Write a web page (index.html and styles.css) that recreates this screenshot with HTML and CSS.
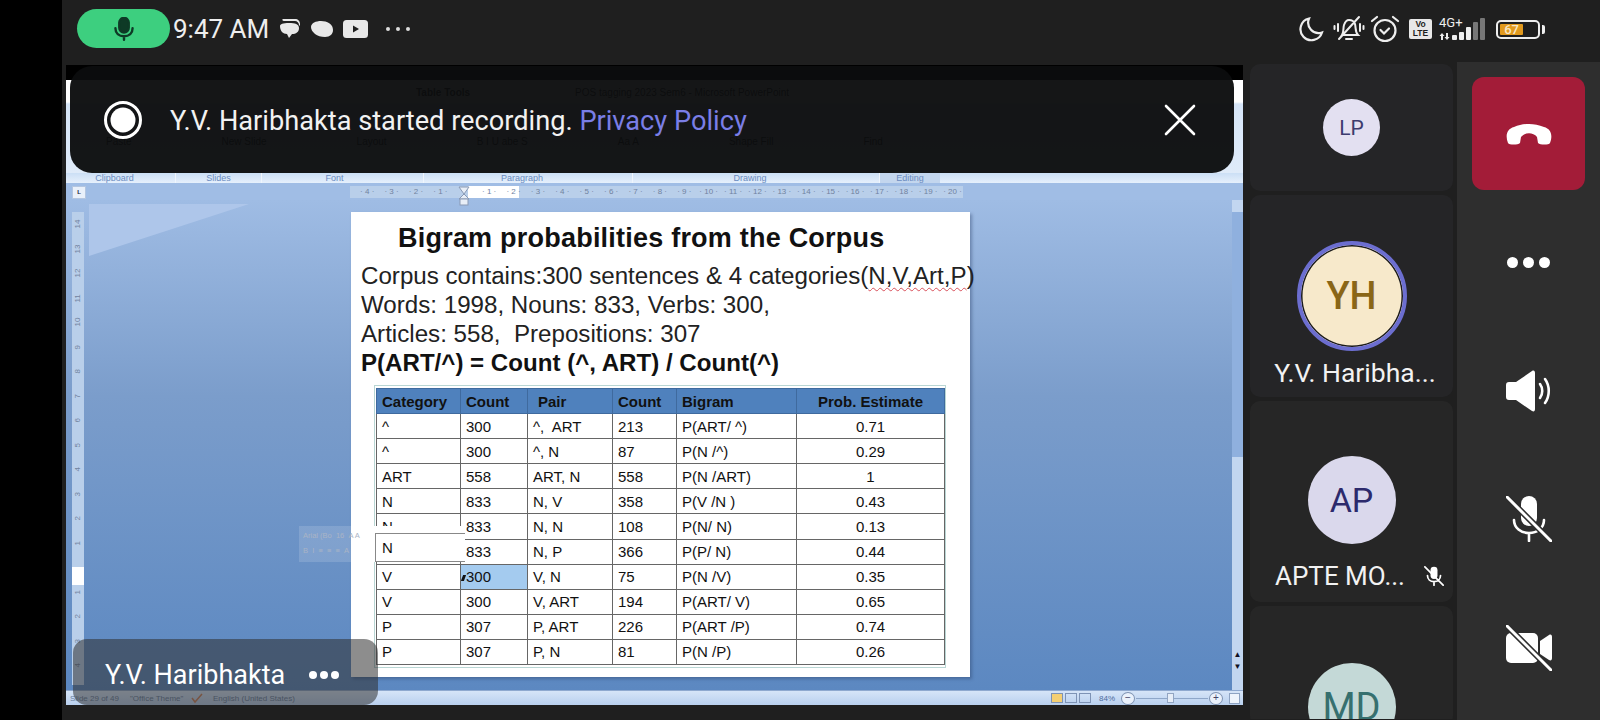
FILE: index.html
```html
<!DOCTYPE html>
<html lang="en">
<head>
  <meta charset="UTF-8">
  <meta name="viewport" content="width=device-width, initial-scale=1.0">
  <title>Meeting</title>
  <link rel="stylesheet" href="styles.css">
</head>
<body>
  <div class="edge"></div>
  <div class="app">

    <header class="status">
      <div class="rec-pill">
        <svg width="22" height="24" viewBox="0 0 24 28" fill="none" stroke="#0e3a26" stroke-width="2.800" stroke-linecap="round">
          <rect x="6.500" y="1" width="11" height="17" rx="5.500" fill="#0e3a26"/>
          <path d="M2 13c0 6 4 9.500 10 9.500s10-3.500 10-9.500M12 22.500v4"/>
        </svg>
      </div>
      <span class="clock">9:47 AM</span>
      <svg class="note-icon" width="24" height="22" viewBox="0 0 24 22" fill="#e8e8e8">
        <path d="M6 1h12c3 0 5 2 5 5v1c0 1-1 1-1 0 0-2-2-4-4-4H7C5 3 5 1 6 1z"/>
        <path d="M3 8c0-2 3-3 9-3s10 1 10 5-3 6-7 6l-3 4-2-4c-4 0-7-3-7-8z"/>
      </svg>
      <svg class="note-icon" width="24" height="18" viewBox="0 0 24 18" fill="#e8e8e8">
        <path d="M1 7c0-4 5-6 10-6 6 0 12 3 12 9 0 4-3 7-8 7-8 0-14-5-14-10z"/>
      </svg>
      <svg class="note-icon" width="25" height="18" viewBox="0 0 25 18">
        <rect width="25" height="18" rx="3.500" fill="#e8e8e8"/>
        <path d="M10 5.500l6 3.500-6 3.500z" fill="#1f1f1f"/>
      </svg>
      <div class="more-dots small"><i></i><i></i><i></i></div>

      <div class="sys-icons">
        <svg width="26" height="26" viewBox="0 0 26 26" fill="none" stroke="#eee" stroke-width="2.200">
          <path d="M11 2.500a11 11 0 1 0 13 14 10.500 10.500 0 0 1-13-14z"/>
        </svg>
        <svg class="bell" width="32" height="28" viewBox="0 0 32 28" fill="none" stroke="#eee" stroke-width="2" stroke-linecap="round">
          <path d="M9 20c2-3 1-7 2-10 1-3 3-5 5-5s5 1 6 4c1 4 0 8 3 11zM13 24h6M6 24L26 2"/>
          <path d="M5 9v7M1.500 11v3M27 9v7M30.500 11v3"/>
        </svg>
        <svg width="30" height="28" viewBox="0 0 30 28" fill="none" stroke="#eee" stroke-width="2.200" stroke-linecap="round">
          <circle cx="15" cy="15.500" r="10.500"/>
          <path d="M10.500 15l3.500 3.500 5-5M2 6l5-4M28 6l-5-4"/>
        </svg>
        <div class="volte"><span>Vo</span><span>LTE</span></div>
        <div class="signal">
          <span class="net">4G+</span>
          <svg width="47" height="22" viewBox="0 0 47 22" fill="#eee">
            <path d="M3 15l2.500 3H4v4H2v-4H.5zM8 22l-2.500-3H7v-4h2v4h1.500z"/>
            <rect x="13" y="17" width="5" height="5" rx="1"/>
            <rect x="20" y="14" width="5" height="8" rx="1"/>
            <rect x="27" y="9" width="5" height="13" rx="1"/>
            <rect x="34" y="4" width="5" height="18" rx="1" fill="#777"/>
            <rect x="41" y="0" width="5" height="22" rx="1" fill="#777"/>
          </svg>
        </div>
        <div class="battery"><div class="battery-fill">67</div></div>
        <div class="battery-nub"></div>
      </div>
    </header>

    <main class="main">
      <section class="stage">
        <div class="ppt">

          <div class="ribbon">
            <div class="ribbon-title">
              <span class="tools-name">Table Tools</span>
              <span class="doc-name">POS tagging 2023 Sem6 - Microsoft PowerPoint</span>
            </div>
            <div class="ribbon-body">
              <span>Paste</span><span>New Slide</span><span>Layout</span><span>B I U abe S</span><span>Aa A</span><span>Shape Fill</span><span>Find</span>
            </div>
          </div>

          <div class="ribbon-labels">
            <span class="grp g-clip">Clipboard</span>
            <span class="grp g-slides">Slides</span>
            <span class="grp g-font">Font</span>
            <span class="grp g-para">Paragraph</span>
            <span class="grp g-draw">Drawing</span>
            <span class="grp g-edit">Editing</span>
          </div>

          <div class="ruler-row">
            <div class="corner-tab">L</div>
            <div class="hruler">
              <span>4</span><span>3</span><span>2</span><span>1</span><span class="blank"></span><span>1</span><span>2</span><span>3</span><span>4</span><span>5</span><span>6</span><span>7</span><span>8</span><span>9</span><span>10</span><span>11</span><span>12</span><span>13</span><span>14</span><span>15</span><span>16</span><span>17</span><span>18</span><span>19</span><span>20</span>
              <svg class="indent-marker" width="12" height="20" viewBox="0 0 12 20">
                <path d="M1 1h10L6 8l5 5H1l5-5z" fill="#e8eef7" stroke="#8a9ab5"/>
                <rect x="2" y="13" width="8" height="6" fill="#e8eef7" stroke="#8a9ab5"/>
              </svg>
            </div>
          </div>

          <div class="workspace">
            <div class="vruler">
              <span>14</span><span>13</span><span>12</span><span>11</span><span>10</span><span>9</span><span>8</span><span>7</span><span>6</span><span>5</span><span>4</span><span>3</span><span>2</span><span>1</span><span class="blank"></span><span>1</span><span>2</span><span>3</span><span>4</span>
            </div>

            <div class="canvas">
              <div class="slide">
                <h1 class="slide-title">Bigram probabilities from the Corpus</h1>
                <p class="slide-line">Corpus contains:300 sentences &amp; 4 categories(<span class="spell">N,V,Art,P</span>)</p>
                <p class="slide-line">Words: 1998, Nouns: 833, Verbs: 300,</p>
                <p class="slide-line">Articles: 558,&nbsp; Prepositions: 307</p>
                <p class="slide-line formula">P(ART/^) = Count (^, ART) / Count(^)</p>

                <div class="table-frame">
                  <table class="bigram">
                    <colgroup>
                      <col class="c1"><col class="c2"><col class="c3"><col class="c4"><col class="c5"><col class="c6">
                    </colgroup>
                    <tr><th>Category</th><th>Count</th><th class="ind">Pair</th><th>Count</th><th>Bigram</th><th class="mid">Prob. Estimate</th></tr>
                    <tr><td>^</td><td>300</td><td>^,&nbsp; ART</td><td>213</td><td>P(ART/ ^)</td><td class="mid">0.71</td></tr>
                    <tr><td>^</td><td>300</td><td>^, N</td><td>87</td><td>P(N /^)</td><td class="mid">0.29</td></tr>
                    <tr><td>ART</td><td>558</td><td>ART, N</td><td>558</td><td>P(N /ART)</td><td class="mid">1</td></tr>
                    <tr><td>N</td><td>833</td><td>N, V</td><td>358</td><td>P(V /N )</td><td class="mid">0.43</td></tr>
                    <tr><td>N</td><td>833</td><td>N, N</td><td>108</td><td>P(N/ N)</td><td class="mid">0.13</td></tr>
                    <tr><td></td><td>833</td><td>N, P</td><td>366</td><td>P(P/ N)</td><td class="mid">0.44</td></tr>
                    <tr><td>V</td><td class="picked">300</td><td>V, N</td><td>75</td><td>P(N /V)</td><td class="mid">0.35</td></tr>
                    <tr><td>V</td><td>300</td><td>V, ART</td><td>194</td><td>P(ART/ V)</td><td class="mid">0.65</td></tr>
                    <tr><td>P</td><td>307</td><td>P, ART</td><td>226</td><td>P(ART /P)</td><td class="mid">0.74</td></tr>
                    <tr><td>P</td><td>307</td><td>P, N</td><td>81</td><td>P(N /P)</td><td class="mid">0.26</td></tr>
                  </table>
                </div>

                <div class="mini-toolbar">
                  <div class="mini-row">Arial (Bo &nbsp;16 &nbsp;A A</div>
                  <div class="mini-row">B &nbsp;I &nbsp;≡ &nbsp;≡ &nbsp;≡ &nbsp;A</div>
                  <div class="mini-cell">N</div>
                </div>
              </div>
            </div>

            <div class="vscroll">
              <div class="thumb"></div>
              <div class="scroll-btns"><span>▲</span><span>▼</span></div>
            </div>
          </div>

          <footer class="ppt-status">
            <span class="ps-text s1">Slide 29 of 49</span>
            <span class="ps-text s2">"Office Theme"</span>
            <svg class="spell-check" width="14" height="12" viewBox="0 0 14 12" fill="none" stroke-width="1.500">
              <path d="M2 6l3 4 7-8" stroke="#d0805a"/>
            </svg>
            <span class="ps-text s3">English (United States)</span>
            <div class="view-btns"><i class="on"></i><i></i><i></i></div>
            <span class="ps-text pct">84%</span>
            <span class="zoom-btn">−</span>
            <div class="zoom-track"><i></i></div>
            <span class="zoom-btn">+</span>
            <span class="fit-btn"></span>
          </footer>
        </div>

        <div class="banner">
          <svg class="rec-mark" width="40" height="40" viewBox="0 0 40 40">
            <circle cx="20" cy="20" r="17.500" fill="none" stroke="#fff" stroke-width="3"/>
            <circle cx="20" cy="20" r="12.500" fill="#fff"/>
          </svg>
          <span class="banner-text">Y.V. Haribhakta started recording. <a class="banner-link">Privacy Policy</a></span>
          <svg class="banner-close" width="32" height="32" viewBox="0 0 32 32" stroke="#fff" stroke-width="2.600" stroke-linecap="round">
            <path d="M2 2l28 28M30 2L2 30"/>
          </svg>
        </div>

        <div class="name-tag">
          <span>Y.V. Haribhakta</span>
          <div class="more-dots"><i></i><i></i><i></i></div>
        </div>
      </section>

      <aside class="people">
        <div class="tile t-lp"><div class="avatar av-lp">LP</div></div>
        <div class="tile t-yh">
          <div class="avatar av-yh">YH</div>
          <div class="tile-name">Y.V. Haribha...</div>
        </div>
        <div class="tile t-ap">
          <div class="avatar av-ap">AP</div>
          <div class="tile-name">APTE MO...
            <svg class="name-mute" width="20" height="20" viewBox="0 0 46 46" fill="none" stroke="#fff" stroke-width="4" stroke-linecap="round">
              <rect x="15" y="2" width="16" height="28" rx="8" fill="#fff" stroke="none"/>
              <path d="M8 22c0 9 7 14 15 14s15-5 15-14M23 36v8M2 2l42 42"/>
            </svg>
          </div>
        </div>
        <div class="tile t-md"><div class="avatar av-md">MD</div></div>
      </aside>

      <aside class="controls">
        <div class="hangup">
          <svg width="46" height="22" viewBox="0 0 46 22" fill="#fff">
            <path d="M2 20C-1 12 1 6 8 4c10-4 20-4 30 0 7 2 9 8 6 16-1 2-10 2-12 0l-1-6c-4-5-12-5-16 0l-1 6c-2 2-11 2-12 0z"/>
          </svg>
        </div>
        <div class="ctrl"><div class="more-dots big"><i></i><i></i><i></i></div></div>
        <div class="ctrl">
          <svg width="46" height="42" viewBox="0 0 46 42" fill="#fff">
            <path d="M3 12h7L26 1c2-1 3 0 3 2v36c0 2-1 3-3 2L10 30H3c-2 0-3-1-3-3V15c0-2 1-3 3-3z"/>
            <path d="M34 14c3 4 3 10 0 14M39 9c5 7 5 17 0 24" fill="none" stroke="#fff" stroke-width="2.600" stroke-linecap="round"/>
          </svg>
        </div>
        <div class="ctrl">
          <svg width="46" height="46" viewBox="0 0 46 46" fill="none" stroke="#fff" stroke-width="2.600" stroke-linecap="round">
            <rect x="15" y="0" width="16" height="30" rx="8" fill="#fff" stroke="none"/>
            <path d="M8 24c0 8 7 13 15 13s15-5 15-13M23 37v8"/>
            <path d="M1 1l44 44" stroke="#2e2e2e" stroke-width="6"/>
            <path d="M1 1l44 44" stroke-width="3"/>
          </svg>
        </div>
        <div class="ctrl">
          <svg width="46" height="46" viewBox="0 0 46 46" fill="none">
            <rect x="0" y="8" width="32" height="30" rx="5" fill="#fff"/>
            <path d="M34 16l9-6c2-1 3 0 3 2v21c0 2-1 3-3 2l-9-6z" fill="#fff"/>
            <path d="M1 1l44 44" stroke="#2e2e2e" stroke-width="6"/>
            <path d="M1 1l44 44" stroke="#fff" stroke-width="3" stroke-linecap="round"/>
          </svg>
        </div>
      </aside>
    </main>
  </div>
</body>
</html>
```

FILE: styles.css
```css
html, body { margin: 0; height: 720px; overflow: hidden; }
body { display: flex; background: #1f1f1f; font-family: Roboto, "Liberation Sans", sans-serif; color: #fff; }
.edge { width: 62px; background: #000; }
.app { flex: 1; display: flex; flex-direction: column; min-width: 0; }

/* phone status bar */
.status { height: 62px; display: flex; align-items: center; padding-left: 15px; }
.rec-pill { width: 93px; height: 39px; border-radius: 20px; background: #3dcf7f; display: flex; align-items: center; justify-content: center; margin-top: -5px; }
.clock { font-size: 26px; margin: -5px 8px 0 3px; color: #eee; }
.note-icon { margin: -4px 9px 0 0; }
.more-dots { display: flex; gap: 3px; }
.more-dots i { width: 8px; height: 8px; border-radius: 50%; background: #fff; }
.more-dots.small { margin: -5px 0 0 9px; gap: 6px; }
.more-dots.small i { width: 4px; height: 4px; background: #ddd; }
.more-dots.big { gap: 5px; }
.more-dots.big i { width: 11px; height: 11px; }

.sys-icons { margin-left: auto; margin-right: 55px; display: flex; align-items: center; margin-top: -4px; }
.sys-icons svg { margin-right: 9px; }
.sys-icons .bell { margin-right: 5px; }
.sys-icons .signal svg { margin: 0; display: block; }
.volte { width: 23px; height: 20px; background: #e8e8e8; border-radius: 2px; color: #1f1f1f; font: bold 8.500px/9px "Liberation Sans", sans-serif; display: flex; flex-direction: column; align-items: center; justify-content: center; margin-right: 7px; }
.signal { position: relative; width: 47px; margin-right: 10px; }
.net { position: absolute; left: 0; top: -1px; font-size: 13px; line-height: 12px; color: #eee; }
.battery { width: 44px; height: 19px; box-sizing: border-box; border: 2px solid #eee; border-radius: 5px; padding: 2px; }
.battery-fill { width: 64%; height: 100%; background: #e29a1e; font-size: 13px; line-height: 11px; font-weight: 500; color: #f8e8c8; text-align: center; border-radius: 1px; }
.battery-nub { width: 3px; height: 9px; background: #eee; border-radius: 0 2px 2px 0; margin-left: 2px; }

/* main row */
.main { display: flex; height: 658px; }
.stage { position: relative; width: 1177px; height: 640px; margin: 3px 0 0 4px; border-top: 15px solid #000; box-sizing: border-box; flex: none; }
.ppt { height: 625px; display: flex; flex-direction: column; background: #a3bfe6; overflow: hidden; }

/* ribbon, mostly behind the banner */
.ribbon { height: 93px; background: linear-gradient(#fff 0, #fff 22px, #d6e5f7 24px, #dfebf9 100%); color: #222; font: 10px "Liberation Sans", sans-serif; }
.ribbon-title { height: 24px; display: flex; align-items: center; }
.tools-name { margin-left: 350px; font-weight: bold; }
.doc-name { margin-left: 105px; }
.ribbon-body { display: flex; gap: 90px; padding: 32px 0 0 40px; }
.ribbon-labels { height: 10px; display: flex; background: linear-gradient(#cbdff5, #e6f0fc); font: 9px/10px "Liberation Sans", sans-serif; color: #6b8cc0; }
.grp { text-align: center; box-sizing: border-box; border-right: 1px solid #f0f6fd; }
.g-clip { width: 110px; padding-right: 12px; }
.g-slides { width: 86px; }
.g-font { width: 162px; padding-right: 16px; }
.g-para { width: 209px; padding-right: 12px; }
.g-draw { width: 247px; padding-right: 12px; }
.g-edit { width: 60px; background: #c3d6ee; border: 0; }

.ruler-row { height: 17px; box-sizing: border-box; padding-top: 1px; display: flex; align-items: center; background: #a0bde5; }
.corner-tab { width: 12px; height: 11px; margin-left: 6px; background: #e9f0fa; border: 1px solid #b4c6e0; color: #223; font: bold 6px/11px "Liberation Sans", sans-serif; text-align: center; }
.hruler { position: relative; margin-left: 264px; width: 613px; height: 12px; padding-left: 5px; box-sizing: border-box; display: flex; font: 8px/12px "Liberation Sans", sans-serif; color: #71839f; background: linear-gradient(90deg, #b9cfea 118px, #fff 118px, #fff 169px, #b9cfea 169px); }
.hruler span { width: 24.400px; flex: none; text-align: center; }
.hruler span::before { content: "· "; }
.hruler span::after { content: " ·"; }
.hruler span.blank::before, .hruler span.blank::after { content: ""; }
.indent-marker { position: absolute; left: 108px; top: 0; }

.workspace { height: 490px; display: flex; background: linear-gradient(#9fbce4, #7b9dcb 40%, #5c88c1); }
.vruler { width: 12px; margin: 12px 5px 0 6px; height: 473px; display: flex; flex-direction: column; background: linear-gradient(#b9cfea 355px, #fff 355px, #fff 373px, #b9cfea 373px); font: 8px "Liberation Sans", sans-serif; color: #71839f; }
.vruler span { height: 24.500px; flex: none; writing-mode: vertical-rl; transform: rotate(180deg); text-align: center; line-height: 12px; }

.canvas { position: relative; flex: 1; padding: 12px 0 0 262px; min-width: 0; }
.canvas::before { content: ""; position: absolute; left: 0; top: 4px; width: 160px; height: 52px; background: #aec6ea; clip-path: polygon(0 0, 100% 0, 0 100%); }

/* slide */
.slide { position: relative; width: 619px; height: 465px; box-sizing: border-box; padding: 10px 0 0 10px; background: #fff; color: #111; font-family: "Liberation Sans", Arial, sans-serif; box-shadow: 2px 2px 3px rgba(40, 60, 100, .4); }
.slide-title { margin: 0 0 7px 37px; font-size: 27px; line-height: 32px; white-space: nowrap; letter-spacing: .22px; }
.slide-line { margin: 0; font-size: 24.150px; line-height: 29px; white-space: nowrap; color: #222; }
.formula { font-weight: bold; font-size: 24.100px; color: #111; }
.spell { text-decoration: underline wavy #d8505a 1px; text-underline-offset: 3px; }

.table-frame { margin: 8px 0 0 13px; width: 572px; padding: 2px 1px; box-sizing: border-box; border: 1px solid #b9d6d4; }
.bigram { width: 569px; table-layout: fixed; border-collapse: collapse; font-size: 15px; }
.bigram .c1 { width: 84px; }
.bigram .c2 { width: 67px; }
.bigram .c3 { width: 85px; }
.bigram .c4 { width: 64px; }
.bigram .c5 { width: 120px; }
th, td { height: 25.100px; padding: 0 0 0 5px; border: 1.500px solid #666; text-align: left; box-sizing: border-box; white-space: nowrap; overflow: hidden; }
th { background: #4f81bd; font-size: 15px; border-color: #3f6a9e; }
th.ind { padding-left: 10px; }
.bigram .mid { text-align: center; padding: 0; }
.picked { background: #a4cbef; position: relative; }
.picked::before { content: ""; position: absolute; left: 1px; top: 10px; width: 3px; height: 6px; background: #111; transform: skewX(-20deg); }

/* faded formatting toolbar over the table */
.mini-toolbar { position: absolute; left: -52px; top: 314px; width: 166px; height: 36px; box-sizing: border-box; padding: 2px 4px; font-size: 7.500px; line-height: 15px; color: #a9b4c6; background: linear-gradient(90deg, rgba(255, 255, 255, .14) 52px, #fff 52px); }
.mini-row { white-space: nowrap; }
.mini-cell { position: absolute; left: 76px; top: 7px; width: 90px; height: 29px; box-sizing: border-box; padding-left: 6px; border-top: 1px solid #888; border-bottom: 1.500px solid #888; border-left: 1.500px solid #888; color: #111; font-size: 15px; line-height: 27px; }

.vscroll { width: 11px; background: #c2d6f0; display: flex; flex-direction: column; justify-content: flex-end; }
.thumb { height: 245px; margin: 12px 0 auto; background: #8fb0de; }
.scroll-btns { display: flex; flex-direction: column; font-size: 8px; line-height: 12px; color: #112; text-align: center; padding-bottom: 17px; }

.ppt-status { height: 15px; flex: none; display: flex; align-items: center; border-top: 1px solid #8fa9cf; box-sizing: border-box; background: linear-gradient(#d6e5f8, #b9d0ee); font: 8px "Liberation Sans", sans-serif; color: #6a7f9f; }
.ps-text { white-space: nowrap; }
.s1 { margin-left: 4px; width: 60px; }
.s2 { width: 62px; }
.spell-check { margin-left: -2px; }
.s3 { margin-left: 9px; width: 838px; }
.view-btns { display: flex; gap: 2px; width: 44px; }
.view-btns i { width: 12px; height: 10px; border: 1px solid #7e93b5; box-sizing: border-box; }
.view-btns i.on { background: #f4cf73; }
.pct { margin: 0 6px 0 4px; color: #4d6da0; }
.zoom-btn { width: 14px; height: 13px; border-radius: 50%; background: #eaf1fb; border: 1px solid #7f93b2; box-sizing: border-box; font-size: 10px; line-height: 10px; text-align: center; color: #446; }
.zoom-track { width: 72px; height: 1px; background: #8fa7c9; margin: 0 1px; position: relative; }
.zoom-track i { position: absolute; left: 31px; top: -5px; width: 7px; height: 10px; background: #e6edf7; border: 1px solid #92a5c2; box-sizing: border-box; }
.fit-btn { width: 11px; height: 11px; margin-left: 6px; background: #eef4fc; border: 1px solid #8ea3c2; box-sizing: border-box; }

/* overlays on the shared screen */
.banner { position: absolute; left: 4px; top: -14px; width: 1164px; height: 107px; border-radius: 22px; background: rgba(11, 12, 14, .96); display: flex; align-items: center; }
.rec-mark { margin-left: 33px; }
.banner-text { margin: 2px 0 0 27px; font-size: 27.200px; color: #f2f2f2; white-space: nowrap; }
.banner-link { color: #7a7ee6; }
.banner-close { margin-left: auto; margin-right: 38px; }

.name-tag { position: absolute; left: 7px; bottom: 0; width: 305px; height: 66px; box-sizing: border-box; padding: 6px 0 0 32px; border-radius: 14px; background: rgba(48, 48, 48, .55); display: flex; align-items: center; font-size: 27px; gap: 24px; }
.name-tag span { white-space: nowrap; }

/* participants */
.people { width: 203px; margin-left: 7px; padding-top: 2px; display: flex; flex-direction: column; gap: 4px; flex: none; height: 655px; overflow: hidden; }
.tile { background: #252527; border-radius: 10px; display: flex; flex-direction: column; align-items: center; flex: none; }
.t-lp { height: 127px; justify-content: center; }
.t-yh { height: 202px; padding-top: 46px; box-sizing: border-box; }
.t-ap { height: 201px; padding-top: 55px; box-sizing: border-box; background: #262626; }
.t-md { height: 120px; padding-top: 57px; box-sizing: border-box; background: #262626; overflow: hidden; }
.avatar { border-radius: 50%; display: flex; align-items: center; justify-content: center; flex: none; box-sizing: border-box; }
.av-lp { width: 57px; height: 57px; background: #e3e0f1; color: #3c3b6e; font-size: 21px; }
.av-yh { width: 110px; height: 110px; background: #f7e9cb; color: #8a6617; font-size: 38px; font-weight: 500; border: 4px solid #6c6ed0; box-shadow: inset 0 0 0 1.500px #1b1b1d; }
.av-ap { width: 88px; height: 88px; background: #dad8ec; color: #2c2a6c; font-size: 34px; }
.av-md { width: 88px; height: 88px; background: #c4d9d7; color: #36706f; font-size: 38px; }
.tile-name { margin: 6px 0 0 7px; font-size: 26.500px; white-space: nowrap; color: #f2f2f2; position: relative; }
.t-ap .tile-name { margin-top: 17px; align-self: flex-start; margin-left: 25px; display: flex; align-items: center; font-size: 26px; }
.name-mute { margin-left: 19px; }

/* call controls */
.controls { flex: 1; margin-left: 4px; background: #2e2e2e; padding-top: 15px; display: flex; flex-direction: column; align-items: center; }
.hangup { width: 113px; height: 113px; flex: none; border-radius: 12px; background: #a31c38; display: flex; align-items: center; justify-content: center; }
.ctrl { height: 128.500px; flex: none; display: flex; align-items: center; justify-content: center; }
.ctrl:nth-child(2) { margin-top: 8px; }
```
